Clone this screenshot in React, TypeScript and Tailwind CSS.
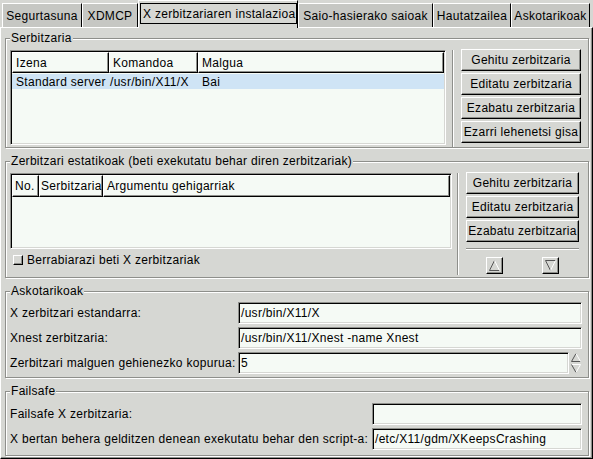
import React from 'react';

const raised =
  'border border-t-white border-l-white border-r-black border-b-black shadow-[inset_-1px_-1px_0_#8e8f8b]';
const sunken =
  'border border-t-[#8e8f8b] border-l-[#8e8f8b] border-r-white border-b-white shadow-[inset_1px_1px_0_#000,inset_-1px_-1px_0_#d6d7d3] bg-[#f5faf5]';

function Frame({
  label,
  className,
  children,
}: {
  label: string;
  className: string;
  children?: React.ReactNode;
}) {
  return (
    <div
      className={`relative shrink-0 border border-[#8e8f8b] shadow-[inset_1px_1px_0_#fff,1px_1px_0_#fff] ${className}`}
    >
      <span className="absolute -top-[8px] left-[4px] bg-[#d6d7d3] px-[1px] leading-[14px] whitespace-nowrap">
        {label}
      </span>
      {children}
    </div>
  );
}

function Button({ label }: { label: string }) {
  return (
    <div className={`${raised} h-[22px] flex items-center justify-center whitespace-nowrap bg-[#d6d7d3]`}>
      {label}
    </div>
  );
}

function HeaderCell({ label, className }: { label: string; className: string }) {
  return (
    <div className={`${raised} h-full flex items-center whitespace-nowrap overflow-hidden ${className}`}>
      {label}
    </div>
  );
}

function Entry({ value, className }: { value?: string; className?: string }) {
  return (
    <div className={`${sunken} h-[22px] flex items-center pl-[2px] whitespace-nowrap overflow-hidden ${className ?? ''}`}>
      {value}
    </div>
  );
}

function Tab({ label, w }: { label: string; w: string }) {
  return (
    <div
      className={`h-[24px] ${w} flex items-center justify-center border-t border-l border-r border-t-white border-l-white border-r-black bg-[#c6c7c3] whitespace-nowrap overflow-hidden`}
    >
      {label}
    </div>
  );
}

function ArrowBtn({ up }: { up: boolean }) {
  return (
    <div className={`${raised} w-[17px] h-[17px] flex items-center justify-center bg-[#d6d7d3]`}>
      <svg width="11" height="11" viewBox="0 0 11 11">
        {up ? (
          <>
            <polyline points="0.5,10.5 5.5,0.5" fill="none" stroke="#555" strokeWidth="1" />
            <polyline points="0.5,10.5 10.5,10.5" fill="none" stroke="#555" strokeWidth="1" />
            <polyline points="5.5,0.5 10.5,10.5" fill="none" stroke="#fff" strokeWidth="1" />
          </>
        ) : (
          <>
            <polyline points="0.5,0.5 10.5,0.5" fill="none" stroke="#555" strokeWidth="1" />
            <polyline points="0.5,0.5 5.5,10.5" fill="none" stroke="#555" strokeWidth="1" />
            <polyline points="10.5,0.5 5.5,10.5" fill="none" stroke="#fff" strokeWidth="1" />
          </>
        )}
      </svg>
    </div>
  );
}

export default function App() {
  return (
    <div className="w-[593px] h-[459px] bg-[#d6d7d3] font-['Liberation_Sans',Arial,sans-serif] text-[12px] tracking-[0.3px] text-black overflow-hidden flex flex-col select-none">
      {/* Tabs */}
      <div className="h-[27px] shrink-0 flex items-end pl-[2px]">
        <Tab label="Segurtasuna" w="w-[80px]" />
        <Tab label="XDMCP" w="w-[56px]" />
        <div className="relative z-10 -mb-[1px] h-[28px] w-[160px] border-t border-l border-r border-t-white border-l-white border-r-black bg-[#d6d7d3] pl-[1px] pt-[2px] pb-[4px]">
          <div className="h-full border border-black flex items-center pl-[2px] whitespace-nowrap overflow-hidden">
            X zerbitzariaren instalazioa
          </div>
        </div>
        <Tab label="Saio-hasierako saioak" w="w-[135px]" />
        <Tab label="Hautatzailea" w="w-[78px]" />
        <Tab label="Askotarikoak" w="w-[79px]" />
      </div>

      {/* Panel */}
      <div className="flex-1 flex flex-col border border-t-white border-l-white border-r-black border-b-black shadow-[inset_-1px_-1px_0_#8e8f8b] pl-[4px] pr-[3px]">
        {/* Serbitzaria */}
        <Frame label="Serbitzaria" className="mt-[10px] h-[110px] pl-[4px] pt-[11px] flex">
          <div className={`${sunken} w-[436px] h-[95px] p-[1px] flex flex-col`}>
            <div className="h-[21px] flex">
              <HeaderCell label="Izena" className="w-[97px] pl-[3px]" />
              <HeaderCell label="Komandoa" className="w-[89px] pl-[3px]" />
              <HeaderCell label="Malgua" className="flex-1 pl-[3px]" />
            </div>
            <div className="mt-[1px] h-[15px] flex items-center bg-[#cfe4f5] whitespace-nowrap">
              <div className="w-[97px] pl-[4px] overflow-hidden">Standard server</div>
              <div className="w-[89px] pl-[1px] overflow-hidden">/usr/bin/X11/X</div>
              <div className="pl-[4px]">Bai</div>
            </div>
          </div>
          <div className="ml-[6px] w-[2px] border-l border-l-[#8e8f8b] border-r border-r-white" />
          <div className="ml-[7px] w-[120px] -mt-[1px] flex flex-col gap-[2px]">
            <Button label="Gehitu zerbitzaria" />
            <Button label="Editatu zerbitzaria" />
            <Button label="Ezabatu zerbitzaria" />
            <Button label="Ezarri lehenetsi gisa" />
          </div>
        </Frame>

        {/* Zerbitzari estatikoak */}
        <Frame
          label="Zerbitzari estatikoak (beti exekutatu behar diren zerbitzariak)"
          className="mt-[13px] h-[117px] pl-[4px] pt-[11px] flex"
        >
          <div className="flex flex-col w-[442px]">
            <div className={`${sunken} h-[76px] p-[1px] flex flex-col`}>
              <div className="h-[22px] flex">
                <HeaderCell label="No." className="w-[27px] pl-[2px]" />
                <HeaderCell label="Serbitzaria" className="w-[64px] pl-[1px]" />
                <HeaderCell label="Argumentu gehigarriak" className="flex-1 pl-[3px]" />
              </div>
            </div>
            <div className="mt-[4px] h-[14px] flex items-center">
              <div className={`${raised} ml-[3px] w-[10px] h-[10px] bg-[#d6d7d3]`} />
              <span className="ml-[4px] whitespace-nowrap">Berrabiarazi beti X zerbitzariak</span>
            </div>
          </div>
          <div className="ml-[5px] mb-[2px] w-[2px] border-l border-l-[#8e8f8b] border-r border-r-white" />
          <div className="ml-[7px] w-[113px] -mt-[1px] flex flex-col gap-[2px]">
            <Button label="Gehitu zerbitzaria" />
            <Button label="Editatu zerbitzaria" />
            <Button label="Ezabatu zerbitzaria" />
            <div className="mt-[4px] h-[2px] border-t border-t-[#8e8f8b] border-b border-b-white" />
            <div className="mt-[5px] flex justify-around">
              <ArrowBtn up={true} />
              <ArrowBtn up={false} />
            </div>
          </div>
        </Frame>

        {/* Askotarikoak */}
        <Frame label="Askotarikoak" className="mt-[13px] h-[87px] pl-[4px] pr-[6px] pt-[10px] flex flex-col gap-[3px]">
          <div className="h-[22px] flex items-center">
            <div className="w-[228px] whitespace-nowrap">X zerbitzari estandarra:</div>
            <Entry value="/usr/bin/X11/X" className="flex-1" />
          </div>
          <div className="h-[22px] flex items-center">
            <div className="w-[228px] whitespace-nowrap">Xnest zerbitzaria:</div>
            <Entry value="/usr/bin/X11/Xnest -name Xnest" className="flex-1" />
          </div>
          <div className="h-[22px] flex items-center">
            <div className="w-[228px] whitespace-nowrap">Zerbitzari malguen gehienezko kopurua:</div>
            <Entry value="5" className="flex-1" />
            <svg className="ml-[1px]" width="12" height="22" viewBox="0 0 12 22">
              <polyline points="1.5,9.5 6,1.5" fill="none" stroke="#555" />
              <polyline points="1.5,9.5 10.5,9.5" fill="none" stroke="#555" />
              <polyline points="6,1.5 10.5,9.5" fill="none" stroke="#fff" />
              <polyline points="1.5,12.5 10.5,12.5" fill="none" stroke="#fff" />
              <polyline points="1.5,12.5 6,20.5" fill="none" stroke="#555" />
              <polyline points="10.5,12.5 6,20.5" fill="none" stroke="#fff" />
            </svg>
          </div>
        </Frame>

        {/* Failsafe */}
        <Frame label="Failsafe" className="mt-[13px] h-[65px] pl-[4px] pr-[6px] pt-[11px] flex flex-col gap-[3px]">
          <div className="h-[22px] flex items-center">
            <div className="w-[362px] whitespace-nowrap">Failsafe X zerbitzaria:</div>
            <Entry className="flex-1" />
          </div>
          <div className="h-[22px] flex items-center">
            <div className="w-[362px] whitespace-nowrap">X bertan behera gelditzen denean exekutatu behar den script-a:</div>
            <Entry value="/etc/X11/gdm/XKeepsCrashing" className="flex-1" />
          </div>
        </Frame>
      </div>
    </div>
  );
}
